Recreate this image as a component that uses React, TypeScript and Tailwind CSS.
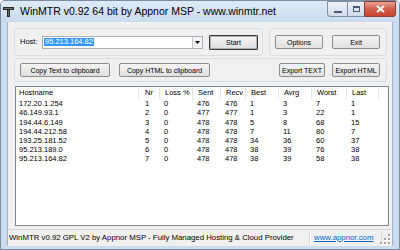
import React from "react";

const font = { fontFamily: '"Liberation Sans", Arial, sans-serif' };

const rows = [
  ["172.20.1.254", "1", "0", "476", "476", "1", "3", "7", "1"],
  ["46.149.93.1", "2", "0", "477", "477", "1", "3", "22", "1"],
  ["194.44.6.149", "3", "0", "478", "478", "5", "8", "68", "15"],
  ["194.44.212.58", "4", "0", "478", "478", "7", "11", "80", "7"],
  ["193.25.181.52", "5", "0", "478", "478", "34", "36", "60", "37"],
  ["95.213.189.0", "6", "0", "478", "478", "38", "39", "76", "38"],
  ["95.213.164.82", "7", "0", "478", "478", "38", "39", "58", "38"],
];

const headers = ["Hostname", "Nr", "Loss %", "Sent", "Recv", "Best", "Avrg", "Worst", "Last"];

function Btn({ w, children }: { w: string; children: React.ReactNode }) {
  return (
    <div
      className={`${w} h-[14px] flex items-center justify-center rounded-[2px] bg-gradient-to-b from-[#f4f4f4] to-[#e0e0e0] text-[7px] text-black leading-none border border-[#8c8c8c]`}
    >
      {children}
    </div>
  );
}

export default function App() {
  return (
    <div
      className="w-[400px] h-[250px] flex flex-col bg-[#cbdcef] overflow-hidden relative border border-[#7a8ea8] rounded-t-[5px]"
      style={font}
    >
      {/* Title bar */}
      <div className="h-[21px] flex items-start bg-gradient-to-b from-[#dfeaf6] to-[#c9dbee] shrink-0">
        <div className="h-[21px] flex items-center pl-[2px]">
          <svg width="11" height="10" viewBox="0 0 11 10">
            <rect x="0" y="0" width="11" height="3" fill="#2a2a2a" />
            <rect x="1" y="1" width="9" height="1" fill="#707070" />
            <rect x="4" y="3" width="3" height="7" fill="#2a2a2a" />
            <rect x="5" y="3" width="1" height="6" fill="#6a6a6a" />
          </svg>
          <span className="ml-[6px] text-[10.5px] text-black leading-none">
            WinMTR v0.92 64 bit by Appnor MSP - www.winmtr.net
          </span>
        </div>
        <div className="ml-auto mr-[3px] flex">
          <div className="w-[21px] h-[16px] border border-[#7d8ea6] rounded-bl-[3px] bg-gradient-to-b from-[#eef3fa] to-[#cfdcec] flex items-center justify-center">
            <div className="w-[8px] h-[2px] bg-[#4a5a72] mt-[5px]" />
          </div>
          <div className="w-[16px] h-[16px] border-y border-[#7d8ea6] bg-gradient-to-b from-[#eef3fa] to-[#cfdcec] flex items-center justify-center">
            <div className="w-[7px] h-[6px] border border-[#4a5a72] border-t-2" />
          </div>
          <div className="w-[32px] h-[16px] border border-[#8b3a30] rounded-br-[3px] bg-gradient-to-b from-[#e8a294] via-[#d0604c] to-[#c8452f] flex items-center justify-center">
            <svg width="9" height="8" viewBox="0 0 9 8">
              <path d="M1 1 L8 7 M8 1 L1 7" stroke="#ffffff" strokeWidth="2" />
            </svg>
          </div>
        </div>
      </div>

      {/* Client area */}
      <div className="mx-[6px] h-[224px] bg-[#f0f0f0] flex flex-col shrink-0 border-l border-r border-[#9fb2c8]">
        {/* Top group boxes */}
        <div className="mt-[6px] ml-[6px] flex gap-[6px] h-[28px]">
          <div className="w-[249px] h-[28px] border border-[#d5dfe5] rounded-[3px] flex items-center pl-[5px]">
            <span className="w-[22px] text-[7.5px] text-black leading-none">Host:</span>
            <div className="w-[161px] h-[13px] border border-[#abadb3] bg-white flex items-center pl-[1px]">
              <span className="bg-[#3399ff] text-white text-[7.5px] leading-none px-[1px] h-[8px] flex items-center">
                95.213.164.82
              </span>
              <div className="ml-auto w-[10px] h-[11px] border-l border-[#c8c8c8] bg-[#f2f2f2] flex items-center justify-center">
                <svg width="5" height="3" viewBox="0 0 5 3">
                  <path d="M0 0 L5 0 L2.5 3 Z" fill="#000" />
                </svg>
              </div>
            </div>
            <div className="ml-[6px]">
              <div className="w-[49px] h-[15px] flex items-center justify-center rounded-[1px] bg-gradient-to-b from-[#f4f4f4] to-[#e0e0e0] text-[7px] text-black leading-none border border-[#3a3a3a] shadow-[inset_0_0_0_1px_#b0b0b0]">
                Start
              </div>
            </div>
          </div>
          <div className="w-[118px] h-[28px] border border-[#d5dfe5] rounded-[3px] flex items-center pl-[5px] gap-[9px]">
            <Btn w="w-[48px]">Options</Btn>
            <Btn w="w-[48px]">Exit</Btn>
          </div>
        </div>

        {/* Second group box */}
        <div className="mt-[2px] ml-[6px] w-[373px] h-[24px] border border-[#d5dfe5] rounded-[3px] flex items-center pl-[5px] pr-[6px]">
          <Btn w="w-[90px]">Copy Text to clipboard</Btn>
          <div className="ml-[9px]">
            <Btn w="w-[91px]">Copy HTML to clipboard</Btn>
          </div>
          <div className="ml-auto flex gap-[7px]">
            <Btn w="w-[46px]">Export TEXT</Btn>
            <Btn w="w-[48px]">Export HTML</Btn>
          </div>
        </div>

        {/* List view */}
        <div className="mt-[4px] ml-[7px] w-[374px] h-[140px] border border-[#828790] bg-white flex flex-col">
          <div className="h-[12px] flex text-[7.5px] leading-none text-black">
            <div className="grid grid-cols-[123px_21px_33px_28px_25px_33px_33px_35px_32px]">
              {headers.map((h, i) => (
                <div
                  key={h}
                  className={`h-[12px] flex items-center border-r border-[#e3e3e3] ${
                    i === 0 ? "pl-[3px]" : i === 1 ? "pl-[6px]" : "pl-[5px]"
                  }`}
                >
                  {h}
                </div>
              ))}
            </div>
          </div>
          <div className="pt-[0.5px] text-[7.5px] leading-none text-black">
            {rows.map((r, ri) => (
              <div key={ri} className="grid grid-cols-[123px_21px_33px_28px_25px_33px_33px_35px_32px] h-[9.17px] items-center">
                {r.map((c, i) => (
                  <div key={i} className={i === 0 ? "pl-[3px]" : i === 1 ? "pl-[6px]" : "pl-[4px]"}>
                    {c}
                  </div>
                ))}
              </div>
            ))}
          </div>
        </div>

        {/* Status bar */}
        <div className="mt-[3px] h-[17px] border-t border-[#d7d7d7] flex items-stretch text-[7.8px] leading-none">
          <div className="w-[301px] flex items-center pl-[1px] text-black">
            WinMTR v0.92 GPL V2 by Appnor MSP - Fully Managed Hosting &amp; Cloud Provider
          </div>
          <div className="w-[1px] my-[1px] bg-[#d7d7d7]" />
          <div className="w-[1px] my-[1px] bg-white mr-[2px]" />
          <div className="w-[68px] flex items-center pl-[1px]">
            <span className="text-[#0066cc] underline">www.appnor.com</span>
          </div>
          <div className="w-[1px] my-[1px] bg-[#d7d7d7]" />
          <div className="flex-1 relative">
            <svg width="12" height="12" viewBox="0 0 12 12" className="absolute right-[1px] bottom-[1px]">
              {[
                [9, 1],
                [9, 5],
                [5, 5],
                [9, 9],
                [5, 9],
                [1, 9],
              ].map(([x, y], i) => (
                <g key={i}>
                  <rect x={x + 1} y={y + 1} width="2" height="2" fill="#ffffff" />
                  <rect x={x} y={y} width="2" height="2" fill="#a0a0a0" />
                </g>
              ))}
            </svg>
          </div>
        </div>
      </div>
      <div className="flex-1" />
    </div>
  );
}
